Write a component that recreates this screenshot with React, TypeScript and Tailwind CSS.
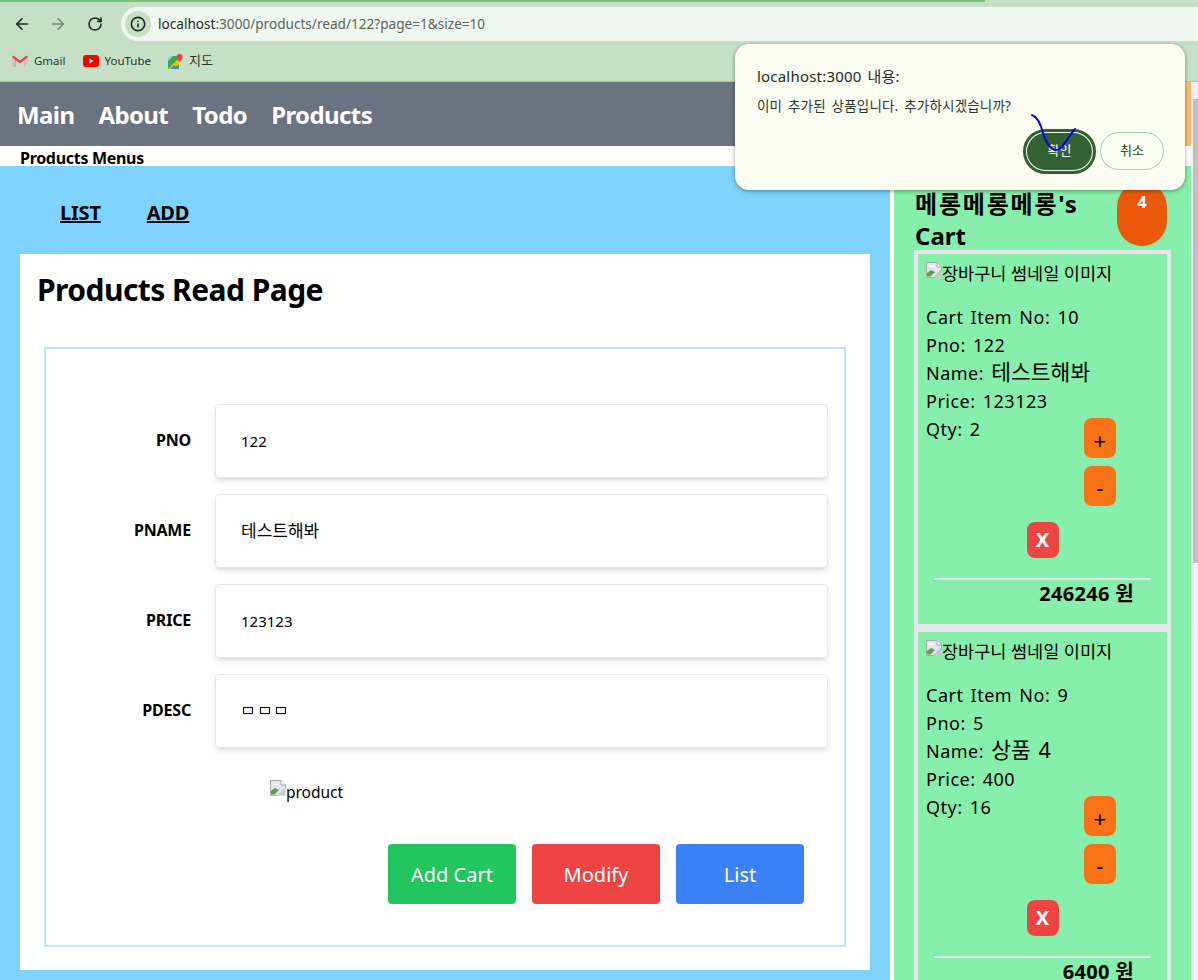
import { ArrowLeft, ArrowRight, RotateCw, Info } from 'lucide-react';

function BrokenImage() {
  return (
    <svg width="16" height="16" viewBox="0 0 16 16" className="inline-block align-baseline shrink-0">
      <path d="M0.5 0.5H11L15.5 5V8L8 15.5H0.5Z" fill="#dbe6f7" stroke="#a8a8a8" />
      <path d="M11 0.5V5H15.5" fill="#fff" stroke="#a8a8a8" />
      <path d="M2 5c1-2 3-2 4-1 1-1 3 0 3 1Z" fill="#fff" />
      <path d="M1 14.5V11l4-3 4 2-4.500 4.500Z" fill="#5fa03c" />
      <path d="M15.500 8.500V15.500H9L15.500 8.500Z" fill="#c9c9c9" />
    </svg>
  );
}

function GmailIcon() {
  return (
    <svg width="16" height="12" viewBox="0 0 16 12">
      <path d="M0 2v10h3.500V5L8 8.500 12.500 5v7H16V2L14.500.5 8 5.500 1.500.5Z" fill="#ea4335" />
      <path d="M3.500 12V5L0 2v10Z" fill="#c5c5c5" />
      <path d="M12.500 12V5L16 2v10Z" fill="#d0d0d0" />
    </svg>
  );
}

function YoutubeIcon() {
  return (
    <svg width="16" height="12" viewBox="0 0 16 12">
      <rect width="16" height="12" rx="3" fill="#ff0000" />
      <path d="M6.500 3.500v5l4-2.500Z" fill="#fff" />
    </svg>
  );
}

function MapsIcon() {
  return (
    <svg width="15" height="15" viewBox="0 0 15 15">
      <path d="M0 2h11v13H0Z" fill="#34a853" />
      <path d="M0 2h5L0 7Z" fill="#a8d5b5" />
      <path d="M0 15 11 4v6l-5 5Z" fill="#fbbc04" />
      <path d="M2 15l4-4 4 4Z" fill="#4285f4" />
      <path d="M11.500 0a3 3 0 0 1 3 3c0 2-3 5-3 5s-3-3-3-5a3 3 0 0 1 3-3Z" fill="#ea4335" />
    </svg>
  );
}

const bookmarks = [
  { icon: GmailIcon, label: 'Gmail', cls: 'text-[11.5px]' },
  { icon: YoutubeIcon, label: 'YouTube', cls: 'text-[11.5px]' },
  { icon: MapsIcon, label: '지도', cls: 'text-[13px]' },
];

const fields = [
  { label: 'PNO', value: '122', cls: 'text-[15px]' },
  { label: 'PNAME', value: '테스트해봐', cls: 'text-[17px]' },
  { label: 'PRICE', value: '123123', cls: 'text-[15px]' },
];

const cartItems = [
  { no: 10, pno: 122, name: '테스트해봐', price: 123123, qty: 2, total: 246246 },
  { no: 9, pno: 5, name: '상품 4', price: 400, qty: 16, total: 6400 },
];

function CartItem({ item }: { item: (typeof cartItems)[number] }) {
  return (
    <li className="border-4 border-[#e5e7eb] h-[378px] pl-[8px] pr-[4px] pt-[8px] shrink-0">
      <div className="flex items-start h-[22px] leading-[22px] text-[17.5px]">
        <BrokenImage />
        <span>장바구니 썸네일 이미지</span>
      </div>
      <div className="mt-[19px] text-[18px] leading-[28px] h-[203px] relative tracking-[0.5px] [word-spacing:2px]">
        <div>Cart Item No: {item.no}</div>
        <div>Pno: {item.pno}</div>
        <div>Name: <span className="text-[21.500px] leading-[20px] tracking-[0px]">{item.name}</span></div>
        <div>Price: {item.price}</div>
        <div>Qty: {item.qty}</div>
        <div className="absolute left-[158px] top-[115px] flex flex-col gap-2 w-[32px]">
          <button className="h-[40px] bg-[#f97316] rounded-lg text-[22px] pt-[4px] text-black">+</button>
          <button className="h-[40px] bg-[#f97316] rounded-lg text-[22px] pt-[2px] text-black">-</button>
        </div>
      </div>
      <div className="flex justify-center pr-[4px] mt-[16px]">
        <button className="w-[32px] h-[36px] bg-[#ef4444] rounded-lg text-white font-bold text-[20px]">X</button>
      </div>
      <div className="ml-[8px] mr-[12px] mt-[20px] border-t-2 border-[#e5e7eb] text-right pr-[17px] font-bold text-[20px] leading-[28px] tracking-[0.3px]">
        {item.total} 원
      </div>
    </li>
  );
}

export default function App() {
  return (
    <div className="relative w-[1198px] h-[980px] overflow-hidden bg-white text-black font-['Noto_Sans','Noto_Sans_CJK_KR',sans-serif]">
      {/* browser chrome */}
      <div className="h-[82px] bg-[#c5e0c5] border-b border-[#a9bfa9] flex flex-col">
        <div className="h-[2px] w-[985px] bg-[#7cbf7e]" />
        <div className="flex items-center h-[34px] mt-[5px] pl-[13px]">
          <ArrowLeft className="w-[18px] h-[18px] text-[#1f2a1f]" strokeWidth={2.2} />
          <ArrowRight className="w-[18px] h-[18px] ml-[18px] text-[#7a8a7a]" strokeWidth={2.2} />
          <RotateCw className="w-[16px] h-[16px] ml-[20px] text-[#1f2a1f]" strokeWidth={2.4} />
          <div className="ml-[18px] flex-1 h-[34px] bg-[#f0f7f0] rounded-l-full flex items-center pl-[4px] text-[13.600px] text-[#5a665a]">
            <span className="w-[26px] h-[26px] rounded-full bg-[#c5e0c5] flex items-center justify-center">
              <Info className="w-[16px] h-[16px] text-[#1f2a1f]" strokeWidth={2.4} />
            </span>
            <span className="ml-[7px]"><span className="text-[#1f2a1f]">localhost</span>:3000/products/read/122?page=1&amp;size=10</span>
          </div>
        </div>
        <div className="flex items-center gap-[17px] pl-[12px] mt-[5px] h-[30px] text-[#2b352b]">
          {bookmarks.map((b) => {
            const Icon = b.icon;
            return (
              <div key={b.label} className={`flex items-center gap-[6px] ${b.cls}`}>
                <Icon />
                <span>{b.label}</span>
              </div>
            );
          })}
        </div>
      </div>

      {/* page */}
      <div className="flex h-[898px]">
        <div className="flex-1 min-w-0">
          <nav className="h-[64px] bg-[#6b7280] flex items-center pl-[17px] pr-[8px] pt-[2px]">
            <ul className="flex gap-[24px] text-white font-bold text-[24px] tracking-[-0.6px]">
              <li>Main</li>
              <li>About</li>
              <li>Todo</li>
              <li>Products</li>
            </ul>
          </nav>
          <div className="h-[20px] leading-[24px] pl-[20px] font-bold text-[16px] tracking-[-0.3px]">Products Menus</div>
          <div className="flex h-[814px]">
            <main className="w-[890px] bg-[#7dd3fc] shrink-0">
              <div className="flex gap-[46px] pl-[60px] pt-[32px] h-[88px] font-bold text-[20px] leading-[30px] underline tracking-[-0.2px]">
                <span>LIST</span>
                <span>ADD</span>
              </div>
              <div className="mx-[20px] h-[716px] bg-white pt-[16px]">
                <h1 className="pl-[17px] text-[30px] font-bold leading-[40px] tracking-[-0.55px]">Products Read Page</h1>
                <div className="mx-[24px] mt-[37px] h-[600px] border-2 border-[#bae6fd] pt-[55px] pl-[22px] pr-[16px]">
                  <div className="flex flex-col gap-[16px]">
                    {fields.map((f) => (
                      <div key={f.label} className="flex items-center">
                        <div className="w-[123px] pb-[2px] text-right font-bold text-[16px] tracking-[-0.2px]">{f.label}</div>
                        <div className={`ml-[24px] flex-1 h-[74px] border border-[#e5e7eb] rounded shadow-md flex items-center pl-[25px] ${f.cls}`}>{f.value}</div>
                      </div>
                    ))}
                    <div className="flex items-center">
                      <div className="w-[123px] pb-[2px] text-right font-bold text-[16px] tracking-[-0.2px]">PDESC</div>
                      <div className="ml-[24px] flex-1 h-[74px] border border-[#e5e7eb] rounded shadow-md flex items-center gap-[6.500px] pl-[27px] pb-[2px]">
                        <span className="w-[10px] h-[7px] border border-[#000066]" />
                        <span className="w-[10px] h-[7px] border border-[#000066]" />
                        <span className="w-[10px] h-[7px] border border-[#000066]" />
                      </div>
                    </div>
                  </div>
                  <div className="flex items-start pl-[202px] mt-[32px] h-[24px] text-[15.500px] leading-[24px]">
                    <BrokenImage />
                    <span>product</span>
                  </div>
                  <div className="flex justify-end gap-[16px] mt-[40px] pr-[24px] text-white text-[20px]">
                    <button className="w-[128px] h-[60px] pt-[2px] bg-[#22c55e] rounded">Add Cart</button>
                    <button className="w-[128px] h-[60px] pt-[2px] bg-[#ef4444] rounded">Modify</button>
                    <button className="w-[128px] h-[60px] pt-[2px] bg-[#3b82f6] rounded">List</button>
                  </div>
                </div>
              </div>
            </main>
            <aside className="ml-[4px] flex-1 bg-[#86efac] pl-[20px] pr-[20px] overflow-hidden">
              <div className="h-[84px] pt-[22px] pl-[1px]">
                <div className="w-[165px] text-[24px] leading-[32px] font-bold"><span className="tracking-[1.800px]">메롱메롱메롱</span>'s Cart</div>
              </div>
              <ul className="flex flex-col">
                {cartItems.map((item) => (
                  <CartItem key={item.no} item={item} />
                ))}
              </ul>
            </aside>
          </div>
        </div>
        {/* scrollbar */}
        <div className="w-[7px] bg-[#f1f1f1] pt-[17px] pl-[2px]">
          <div className="h-[464px] bg-[#c1c1c1]" />
        </div>
      </div>

      {/* orange tail of the nav and cart badge lie over the page */}
      <div className="absolute left-[1184px] top-[82px] w-[7px] h-[64px] bg-[#fdba74]" />
      <div className="absolute left-[1117px] top-[182px] w-[50px] h-[64px] rounded-full bg-[#ea580c] text-white font-bold text-[16px] text-center pt-[8px]">4</div>

      {/* alert dialog */}
      <div className="absolute left-[735px] top-[44px] w-[450px] h-[146px] rounded-[14px] bg-[#fbfdf3] shadow-[0_1px_4px_rgba(0,0,0,0.4)] pl-[22px] pr-[21px] pt-[20px]">
        <div className="text-[15px] leading-[24px] text-[#1f2a1f] tracking-[0.200px] [word-spacing:2px]">localhost:3000 내용:</div>
        <div className="mt-[9px] leading-[18px] text-[#2b352b] tracking-[0.200px] [word-spacing:2px] text-[13.500px]">이미 추가된 상품입니다. 추가하시겠습니까?</div>
        <div className="flex justify-end items-center gap-[8px] mt-[17px] text-[13px]">
          <button className="w-[65px] h-[37px] rounded-full bg-[#336133] text-white outline-[3px] outline-offset-[1px] outline-[#336133]">확인</button>
          <button className="w-[64px] h-[38px] rounded-full border border-[#a3d0a3] text-[#2b4a2b]">취소</button>
        </div>
      </div>

      {/* pen scribble on the screenshot */}
      <svg className="absolute left-[1030px] top-[112px]" width="50" height="42" viewBox="0 0 50 42" fill="none">
        <path d="M2 3c6 2 9 10 11 18 2 8 7 16 13 17 6 0 9-8 13-13 2-3 4-6 6-8" stroke="#0000e6" strokeWidth="2" strokeLinecap="round" />
      </svg>
    </div>
  );
}
